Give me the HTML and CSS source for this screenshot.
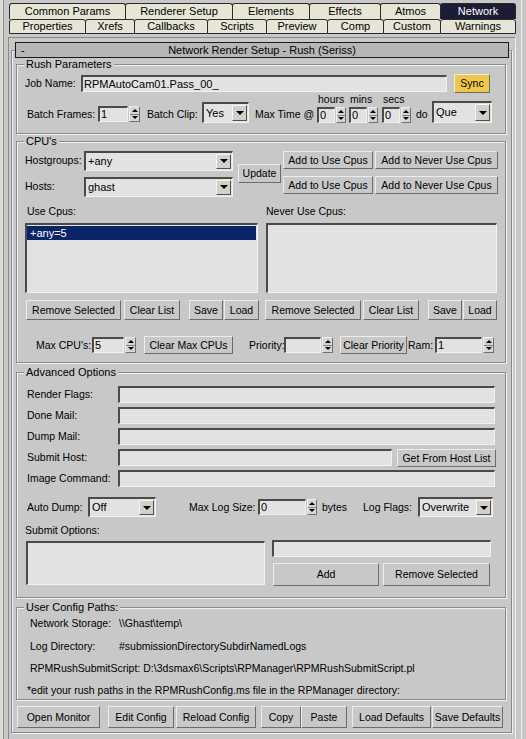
FILE: index.html
```html
<!DOCTYPE html>
<html lang="en">
<head>
<meta charset="UTF-8">
<title>Render Setup - Network</title>
<link rel="stylesheet" href="styles.css">
</head>
<body>
<div class="lbar"></div>
<div class="main">
    <div class="tabs">
        <div class="tabrow row1">
            <div class="tab t-common">Common Params</div>
            <div class="tab t-renderer">Renderer Setup</div>
            <div class="tab t-elements">Elements</div>
            <div class="tab t-effects">Effects</div>
            <div class="tab t-atmos">Atmos</div>
            <div class="tab t-network active">Network</div>
        </div>
        <div class="tabrow row2">
            <div class="tab t-props">Properties</div>
            <div class="tab t-xrefs">Xrefs</div>
            <div class="tab t-callbacks">Callbacks</div>
            <div class="tab t-scripts">Scripts</div>
            <div class="tab t-preview">Preview</div>
            <div class="tab t-comp">Comp</div>
            <div class="tab t-custom">Custom</div>
            <div class="tab t-warnings">Warnings</div>
        </div>
    </div>
    <div class="panel">
        <div class="rollout">
            <div class="rhead"><span class="dash">-</span><span class="rtitle">Network Render Setup - Rush (Seriss)</span><span></span></div>

            <!-- rush parameters -->
            <div class="group g-rush">
                <div class="gt">Rush Parameters</div>
                <div class="row job-row">
                    <span class="lbl job-lbl">Job Name:</span>
                    <div class="edit job-edit">RPMAutoCam01.Pass_00_</div>
                    <div class="btn sync">Sync</div>
                </div>
                <div class="row batch-row">
                    <span class="lbl bf-lbl">Batch Frames:</span>
                    <div class="spinner sp-bf"><div class="edit">1</div><div class="arrows"><i class="up"></i><i class="dn"></i></div></div>
                    <span class="lbl bc-lbl">Batch Clip:</span>
                    <div class="combo cb-clip"><span class="val">Yes</span><span class="arr"></span></div>
                    <span class="lbl mt-lbl">Max Time @</span>
                    <div class="tcol"><span class="tlbl">hours</span><div class="spinner sp-t"><div class="edit">0</div><div class="arrows"><i class="up"></i><i class="dn"></i></div></div></div>
                    <div class="tcol tc-m"><span class="tlbl">mins</span><div class="spinner sp-t"><div class="edit">0</div><div class="arrows"><i class="up"></i><i class="dn"></i></div></div></div>
                    <div class="tcol tc-s"><span class="tlbl">secs</span><div class="spinner sp-t"><div class="edit">0</div><div class="arrows"><i class="up"></i><i class="dn"></i></div></div></div>
                    <span class="lbl do-lbl">do</span>
                    <div class="combo cb-que"><span class="val">Que</span><span class="arr"></span></div>
                </div>
            </div>

            <!-- cpus -->
            <div class="group g-cpu">
                <div class="gt">CPU's</div>
                <div class="row host-block">
                    <div class="host-col">
                        <div class="row hrow"><span class="lbl host-lbl">Hostgroups:</span><div class="combo cb-host"><span class="val">+any</span><span class="arr"></span></div></div>
                        <div class="row hrow"><span class="lbl host-lbl">Hosts:</span><div class="combo cb-host"><span class="val">ghast</span><span class="arr"></span></div></div>
                    </div>
                    <div class="btn update">Update</div>
                    <div class="add-col">
                        <div class="row arow"><div class="btn add-use">Add to Use Cpus</div><div class="btn add-never">Add to Never Use Cpus</div></div>
                        <div class="row arow"><div class="btn add-use">Add to Use Cpus</div><div class="btn add-never">Add to Never Use Cpus</div></div>
                    </div>
                </div>
                <div class="row lists">
                    <div class="lcol lcol-use">
                        <div class="lhead">Use Cpus:</div>
                        <div class="list"><div class="item sel">+any=5</div></div>
                        <div class="row lbtns">
                            <div class="btn b-rem">Remove Selected</div>
                            <div class="btn b-clear">Clear List</div>
                            <div class="btn b-save">Save</div>
                            <div class="btn b-load">Load</div>
                        </div>
                    </div>
                    <div class="lcol lcol-never">
                        <div class="lhead">Never Use Cpus:</div>
                        <div class="list"></div>
                        <div class="row lbtns">
                            <div class="btn b-rem">Remove Selected</div>
                            <div class="btn b-clear">Clear List</div>
                            <div class="btn b-save">Save</div>
                            <div class="btn b-load">Load</div>
                        </div>
                    </div>
                </div>
                <div class="row max-row">
                    <span class="lbl mc-lbl">Max CPU's:</span>
                    <div class="spinner sp-mc"><div class="edit">5</div><div class="arrows"><i class="up"></i><i class="dn"></i></div></div>
                    <div class="btn clear-mc">Clear Max CPUs</div>
                    <span class="lbl pr-lbl">Priority:</span>
                    <div class="spinner sp-pr"><div class="edit"></div><div class="arrows"><i class="up"></i><i class="dn"></i></div></div>
                    <div class="btn clear-pr">Clear Priority</div>
                    <span class="lbl ram-lbl">Ram:</span>
                    <div class="spinner sp-ram"><div class="edit">1</div><div class="arrows"><i class="up"></i><i class="dn"></i></div></div>
                </div>
            </div>

            <!-- advanced -->
            <div class="group g-adv">
                <div class="gt">Advanced Options</div>
                <div class="row frow first"><span class="lbl f-lbl">Render Flags:</span><div class="edit f-edit"></div></div>
                <div class="row frow"><span class="lbl f-lbl">Done Mail:</span><div class="edit f-edit"></div></div>
                <div class="row frow"><span class="lbl f-lbl">Dump Mail:</span><div class="edit f-edit"></div></div>
                <div class="row frow"><span class="lbl f-lbl">Submit Host:</span><div class="edit f-edit short"></div><div class="btn gfh">Get From Host List</div></div>
                <div class="row frow"><span class="lbl f-lbl">Image Command:</span><div class="edit f-edit"></div></div>
                <div class="row dump-row">
                    <span class="lbl ad-lbl">Auto Dump:</span>
                    <div class="combo cb-dump"><span class="val">Off</span><span class="arr"></span></div>
                    <span class="lbl mls-lbl">Max Log Size:</span>
                    <div class="spinner sp-log"><div class="edit">0</div><div class="arrows"><i class="up"></i><i class="dn"></i></div></div>
                    <span class="lbl by-lbl">bytes</span>
                    <span class="lbl lf-lbl">Log Flags:</span>
                    <div class="combo cb-flags"><span class="val">Overwrite</span><span class="arr"></span></div>
                </div>
                <div class="so-lbl">Submit Options:</div>
                <div class="row so-block">
                    <div class="edit so-text"></div>
                    <div class="so-right">
                        <div class="edit so-edit"></div>
                        <div class="row so-btns">
                            <div class="btn so-add">Add</div>
                            <div class="btn so-rem">Remove Selected</div>
                        </div>
                    </div>
                </div>
            </div>

            <!-- paths -->
            <div class="group g-paths">
                <div class="gt">User Config Paths:</div>
                <div class="row prow first"><span class="lbl p-lbl">Network Storage:</span><span>\\Ghast\temp\</span></div>
                <div class="row prow"><span class="lbl p-lbl">Log Directory:</span><span>#submissionDirectorySubdirNamedLogs</span></div>
                <div class="row prow"><span class="lbl p-lbl2">RPMRushSubmitScript:</span><span>D:\3dsmax6\Scripts\RPManager\RPMRushSubmitScript.pl</span></div>
                <div class="row prow note">*edit your rush paths in the RPMRushConfig.ms file in the RPManager directory:</div>
            </div>

            <div class="row bot">
                <div class="btn b-open">Open Monitor</div>
                <div class="btn b-edit">Edit Config</div>
                <div class="btn b-reload">Reload Config</div>
                <div class="btn b-copy">Copy</div>
                <div class="btn b-paste">Paste</div>
                <div class="btn b-ldef">Load Defaults</div>
                <div class="btn b-sdef">Save Defaults</div>
            </div>
        </div>
    </div>
</div>
<div class="rbar"></div>
</body>
</html>
```

FILE: styles.css
```css
body{
    margin: 0;
    width: 526px;
    height: 739px;
    overflow: hidden;
    display: flex;
    background: #c8c8c8;
    font: 10.5px/13px "Liberation Sans", Arial, sans-serif;
    color: #000;
}
.lbar{
    width: 8px;
    flex: none;
    background: linear-gradient(to right, #dcdcd2 0, #dcdcd2 3px, #8e8e8e 3px, #8e8e8e 4px, #c8c8c8 4px);
}
.main{width: 508px; flex: none; display: flex; flex-direction: column;}
.rbar{
    width: 10px;
    flex: none;
    background: linear-gradient(to right, #c8c8c8 0, #c8c8c8 5px, #eeeeee 5px, #eeeeee 6px, #c8c8c8 6px);
}

/* tabs */
.tabs{padding: 3px 0 0 1px;}
.tabrow{display: flex;}
.row1{height: 16px;}
.row2{height: 15px;}
.tab{
    box-sizing: border-box;
    flex: none;
    margin-right: -1px;
    border: 1px solid #2a2a2a;
    border-bottom: none;
    border-radius: 3px 3px 0 0;
    background: #e6e5d6;
    text-align: center;
    white-space: nowrap;
    font-size: 11px;
    line-height: 15px;
}
.row2 .tab{border-bottom: 1px solid #2a2a2a; line-height: 13px;}
.tab.active{background: #1c1c36; color: #fff;}
.t-common{width: 117px;}
.t-renderer{width: 108px;}
.t-elements{width: 78px;}
.t-effects{width: 72px;}
.t-atmos{width: 61px;}
.t-network{width: 76px;}
.t-props{width: 77px;}
.t-xrefs{width: 50px;}
.t-callbacks{width: 74px;}
.t-scripts{width: 60px;}
.t-preview{width: 62px;}
.t-comp{width: 57px;}
.t-custom{width: 58px;}
.t-warnings{width: 76px;}

/* panel + rollout */
.panel{
    flex: 1;
    margin-top: 3px;
    border-top: 1px solid #8a8a8a;
    border-left: 1px solid #8a8a8a;
    border-right: 1px solid #efefef;
}
.rollout{
    box-sizing: border-box;
    width: 501px;
    margin: 12px 0 0 2px;
    padding-bottom: 4px;
    border: 1px solid #8a8a8a;
    box-shadow: inset 1px 1px 0 #f0f0f0, 1px 1px 0 #f0f0f0;
}
.rhead{
    box-sizing: border-box;
    height: 16px;
    margin: -9px 2px 0 3px;
    border: 1px solid #1a1a1a;
    background: #b6b6b6;
    display: grid;
    grid-template-columns: 20px 1fr 20px;
    font-size: 11px;
    line-height: 14px;
}
.dash{padding-left: 5px;}
.rtitle{text-align: center;}

/* group boxes */
.group{
    box-sizing: border-box;
    width: 490px;
    margin-left: 4px;
    border: 1px solid #8a8a8a;
    box-shadow: inset 1px 1px 0 #f0f0f0, 1px 1px 0 #f0f0f0;
}
.gt{
    width: max-content;
    height: 13px;
    margin: -7px 0 0 7px;
    padding: 0 2px;
    background: #c8c8c8;
    font-size: 11px;
}
.row{display: flex; align-items: center;}
.lbl{white-space: nowrap; flex: none;}

/* controls */
.edit, .list{
    box-sizing: border-box;
    flex: none;
    background: #e2e2e2;
    border-style: solid;
    border-width: 2px 1px 1px 2px;
    border-color: #4a4a4a #f2f2f2 #f2f2f2 #4a4a4a;
    padding-left: 1px;
    white-space: nowrap;
    overflow: hidden;
}
.btn{
    box-sizing: border-box;
    flex: none;
    display: flex;
    align-items: center;
    justify-content: center;
    border: 1px solid;
    border-color: #ececec #6c6c6c #6c6c6c #ececec;
    background: #c8c8c8;
    white-space: nowrap;
}
.combo{
    box-sizing: border-box;
    flex: none;
    display: flex;
    align-items: stretch;
    background: #e2e2e2;
    border-style: solid;
    border-width: 2px 1px 1px 2px;
    border-color: #4a4a4a #f2f2f2 #f2f2f2 #4a4a4a;
}
.combo .val{flex: 1; padding-left: 2px; display: flex; align-items: center; white-space: nowrap; font-size: 11px;}
.combo .arr{
    box-sizing: border-box;
    width: 15px;
    margin: 1px 1px 1px 0;
    border: 1px solid;
    border-color: #f4f4f4 #505050 #505050 #f4f4f4;
    background: #d4d0c8;
    display: flex;
    align-items: center;
    justify-content: center;
}
.combo .arr:after{
    content: "";
    border-left: 4px solid transparent;
    border-right: 4px solid transparent;
    border-top: 4px solid #000;
}
.spinner{display: flex; gap: 1px; height: 16px; flex: none;}
.spinner .edit{height: 16px; line-height: 13px; font-size: 11px;}
.arrows{
    box-sizing: border-box;
    width: 11px;
    display: flex;
    flex-direction: column;
    border: 1px solid;
    border-color: #f0f0f0 #707070 #707070 #f0f0f0;
    background: #d6d6d6;
}
.arrows i{flex: 1; display: flex; align-items: center; justify-content: center;}
.arrows .up{border-bottom: 1px solid #808080;}
.arrows i:after{content: ""; border-left: 3px solid transparent; border-right: 3px solid transparent;}
.arrows .up:after{border-bottom: 3px solid #000;}
.arrows .dn:after{border-top: 3px solid #000;}

/* rush parameters */
.g-rush{margin-top: 6px; height: 70px;}
.job-row{margin-top: 3px; height: 19px; padding-left: 8px;}
.job-lbl{width: 56px;}
.job-edit{width: 366px; height: 17px; line-height: 14px; font-size: 11px;}
.btn.sync{width: 36px; height: 19px; margin-left: 7px; background: #f0c848;}
.batch-row{height: 31px; align-items: flex-end;}
.batch-row > .lbl{margin-bottom: 3px;}
.bf-lbl{margin-left: 10px; width: 71px;}
.sp-bf{margin-bottom: 2px;}
.sp-bf .edit{width: 30px;}
.bc-lbl{margin-left: 7px; width: 55px;}
.cb-clip{width: 47px; height: 21px; margin-bottom: 1px;}
.mt-lbl{margin-left: 6px; width: 62px;}
.tcol{display: flex; flex-direction: column; gap: 1px; margin-bottom: 1px; flex: none;}
.tlbl{height: 13px; padding-left: 1px; line-height: 12px;}
.tc-m{margin-left: 3px;}
.tc-s{margin-left: 4px;}
.sp-t .edit{width: 18px;}
.sp-t .arrows{width: 10px;}
.do-lbl{margin-left: 5px; width: 16px;}
.cb-que{width: 60px; height: 22px; margin-bottom: 1px;}

/* cpus */
.g-cpu{margin-top: 7px; height: 222px;}
.host-block{margin-top: 2px; height: 47px; padding-left: 8px;}
.host-col{width: 208px; display: flex; flex-direction: column; gap: 6px;}
.hrow{height: 20px;}
.host-lbl{width: 59px;}
.cb-host{width: 149px; height: 20px;}
.update{margin-left: 5px; width: 43px; height: 19px;}
.add-col{margin: 1px 0 0 2px; align-self: flex-start; display: flex; flex-direction: column; gap: 7px;}
.arow{height: 18px;}
.add-use{width: 90px; height: 18px;}
.add-never{width: 123px; height: 18px; margin-left: 2px;}
.lists{align-items: flex-start; padding-left: 8px;}
.lcol{flex: none;}
.lcol-use{width: 233px;}
.lcol-never{width: 232px; margin-left: 7px;}
.lhead{margin-top: 8px; height: 13px; padding-left: 2px;}
.lcol-never .lhead{padding-left: 1px;}
.list{margin-top: 5px; height: 70px; padding: 0;}
.lcol-use .list{width: 233px;}
.lcol-never .list{width: 231px; margin-left: 1px;}
.item{margin: 1px 1px 0 0; height: 14px; line-height: 14px; padding-left: 3px; font-size: 11px;}
.item.sel{background: #0a246a; color: #fff;}
.lbtns{margin-top: 7px; height: 20px;}
.lbtns .btn{height: 20px;}
.b-rem{width: 95px; margin-left: 1px;}
.b-clear{width: 56px; margin-left: 3px;}
.b-save{width: 34px; margin-left: 9px;}
.b-load{width: 35px; margin-left: 1px;}
.lcol-never .b-rem{width: 96px; margin-left: 0;}
.lcol-never .b-clear{margin-left: 2px;}
.lcol-never .b-load{width: 34px;}
.max-row{margin-top: 16px; height: 18px; padding-left: 19px;}
.mc-lbl{width: 56px;}
.sp-mc .edit{width: 32px;}
.clear-mc{margin-left: 8px; width: 89px; height: 18px;}
.pr-lbl{margin-left: 16px; width: 35px;}
.sp-pr .edit{width: 37px;}
.clear-pr{margin-left: 7px; width: 67px; height: 18px;}
.ram-lbl{margin-left: 1px; width: 27px;}
.sp-ram .edit{width: 47px;}

/* advanced */
.g-adv{margin-top: 9px; height: 226px;}
.frow{height: 17px; margin-top: 4px; padding-left: 10px; align-items: flex-start;}
.frow.first{margin-top: 7px;}
.f-lbl{width: 91px; line-height: 17px;}
.f-edit{width: 377px; height: 17px;}
.f-edit.short{width: 274px;}
.gfh{margin-left: 5px; width: 99px; height: 18px;}
.dump-row{margin-top: 10px; height: 20px; padding-left: 10px;}
.ad-lbl{width: 61px;}
.cb-dump{width: 68px; height: 20px;}
.mls-lbl{margin-left: 33px; width: 69px;}
.sp-log .edit{width: 48px;}
.sp-log .arrows{width: 10px;}
.by-lbl{margin-left: 5px; width: 41px;}
.lf-lbl{width: 55px;}
.cb-flags{width: 75px; height: 20px;}
.so-lbl{margin-top: 7px; height: 13px; padding-left: 8px;}
.so-block{margin-top: 3px; align-items: flex-start; padding-left: 9px;}
.so-text{margin-top: 1px; width: 239px; height: 44px;}
.so-right{margin-left: 7px; width: 219px;}
.so-edit{width: 219px; height: 17px;}
.so-btns{margin-top: 6px;}
.so-add{margin-left: 1px; width: 106px; height: 23px;}
.so-rem{margin-left: 4px; width: 107px; height: 23px;}

/* paths */
.g-paths{margin-top: 9px; height: 93px;}
.prow{height: 13px; margin-top: 9px; padding-left: 13px; white-space: nowrap;}
.prow.first{margin-top: 3px;}
.prow.first + .prow{margin-top: 10px;}
.p-lbl{width: 89px;}
.p-lbl2{margin-right: 3px;}
.prow.note{padding-left: 10px;}

/* bottom buttons */
.bot{margin-top: 6px; height: 22px; padding-left: 5px;}
.bot .btn{height: 22px;}
.b-open{width: 83px;}
.b-edit{width: 66px; margin-left: 8px;}
.b-reload{width: 80px; margin-left: 2px;}
.b-copy{width: 40px; margin-left: 5px;}
.b-paste{width: 46px;}
.b-ldef{width: 79px; margin-left: 5px;}
.b-sdef{width: 71px; margin-left: 1px;}
```
